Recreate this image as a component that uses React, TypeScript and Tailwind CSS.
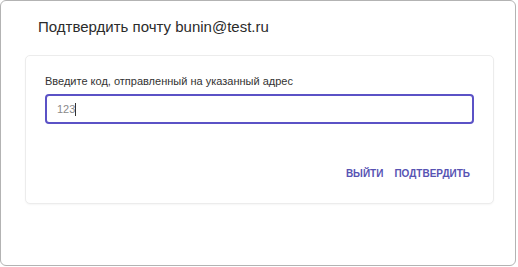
export default function App() {
  return (
    <div className="w-[518px] h-[267px] bg-white" style={{ fontFamily: '"Liberation Sans", Arial, sans-serif' }}>
      <div className="w-[516px] h-[266px] border border-[#b3b3b3] rounded-[6px] bg-white">
        <div className="pt-[14px] pl-[37px] text-[15px] leading-6 text-[#2b2b2b]">
          Подтвердить почту bunin@test.ru
        </div>
        <div className="mt-[16px] ml-[24px] w-[469px] h-[149px] border border-[#ececec] rounded-[5px] bg-white shadow-[0_1px_2px_rgba(0,0,0,0.04)] pt-[17px] pl-[19px] pr-[19px]">
          <div className="text-[11px] leading-4 text-[#333]">Введите код, отправленный на указанный адрес</div>
          <div className="mt-[5px] h-[30px] w-[429px] border-2 border-[#5b52c6] rounded-[4px] flex items-center pl-[10px]">
            <span className="text-[11px] text-[#8a8a8a]">123</span>
            <span className="w-px h-[13px] bg-[#333]"></span>
          </div>
          <div className="mt-[42px] flex justify-end gap-[11px] pr-[4px]">
            <span className="text-[10px] leading-4 font-bold text-[#5753b3]">ВЫЙТИ</span>
            <span className="text-[10px] leading-4 font-bold text-[#5753b3]">ПОДТВЕРДИТЬ</span>
          </div>
        </div>
      </div>
    </div>
  );
}
